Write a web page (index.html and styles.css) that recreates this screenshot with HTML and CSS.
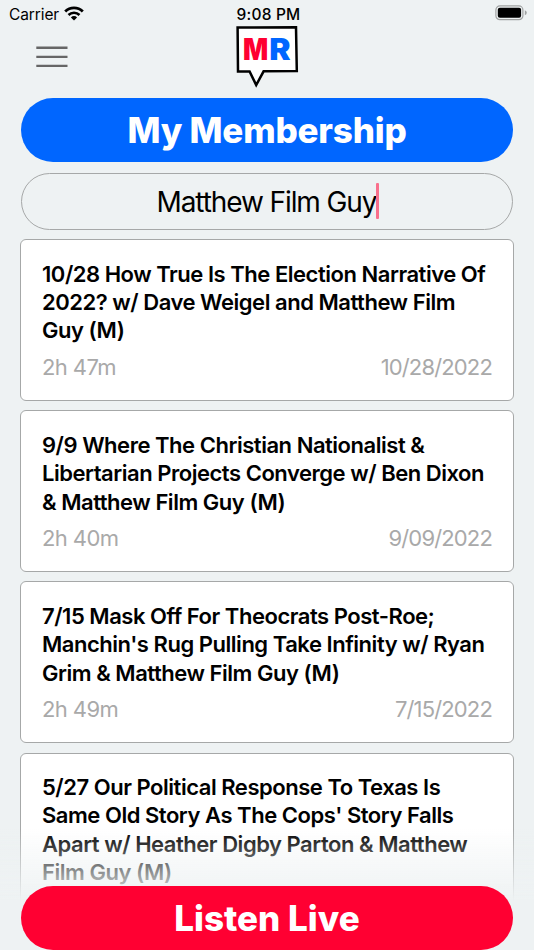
FILE: index.html
```html
<!DOCTYPE html>
<html lang="en">

<head>
    <meta charset="UTF-8">
    <meta name="viewport" content="width=device-width, initial-scale=1.0">
    <title>My Membership</title>
    <link rel="stylesheet" href="styles.css">
</head>

<body>
    <div class="status-bar">
        <div class="carrier">
            <span>Carrier</span>
            <svg class="wifi" width="20" height="15" viewBox="0 0 20 15">
                <path d="M1.2 5.6 A12.4 12.4 0 0 1 18.8 5.6" fill="none" stroke="#000" stroke-width="2.8" />
                <path d="M4.5 9 A7.8 7.8 0 0 1 15.5 9" fill="none" stroke="#000" stroke-width="2.6" />
                <path d="M10 14.5 L6.9 11.4 A4.4 4.4 0 0 1 13.1 11.4 Z" />
            </svg>
        </div>
        <span class="time">9:08 PM</span>
        <svg class="battery" width="33" height="16" viewBox="0 0 33 16">
            <rect x="0.9" y="0.9" width="27" height="13.8" rx="4" fill="none" stroke="#a0a2a2" stroke-width="1.2" />
            <rect x="2.8" y="2.8" width="23.3" height="10" rx="2" />
            <path d="M29.8 5.3 Q31.8 6 31.8 7.8 Q31.8 9.6 29.8 10.3 Z" fill="#a0a2a2" />
        </svg>
    </div>

    <header class="header">
        <button class="menu" aria-label="Menu">
            <svg width="32" height="22" viewBox="0 0 32 22">
                <path d="M0.3 1.8 H31.5 M0.3 10.9 H31.5 M0.3 19.9 H31.5" stroke="#666" stroke-width="2.4" />
            </svg>
        </button>
        <svg class="logo" width="64" height="64" viewBox="0 0 64 64">
            <path d="M2.6 2.6 L61 2.3 L61.8 46 L28.6 46.3 L21.2 60 L14.6 46.4 L3 46.5 Z" fill="#fff" stroke="#000" stroke-width="2.5" />
            <text class="logo-m" x="8" y="35.3" textLength="25.2" lengthAdjust="spacingAndGlyphs">M</text>
            <text class="logo-r" x="34.3" y="35.3" textLength="21.3" lengthAdjust="spacingAndGlyphs">R</text>
        </svg>
    </header>

    <main class="content">
        <button class="pill membership"><span>My Membership</span></button>

        <div class="search">
            <span class="query">Matthew Film Guy</span><span class="caret"></span>
        </div>

        <div class="episodes">
            <article class="card">
                <h2>10/28 How True Is The Election Narrative Of<br>2022? w/ Dave Weigel and Matthew Film<br>Guy (M)</h2>
                <div class="meta"><span>2h 47m</span><span class="date">10/28/2022</span></div>
            </article>
            <article class="card">
                <h2>9/9 Where The Christian Nationalist &amp;<br>Libertarian Projects Converge w/ Ben Dixon<br>&amp; Matthew Film Guy (M)</h2>
                <div class="meta"><span>2h 40m</span><span class="date">9/09/2022</span></div>
            </article>
            <article class="card">
                <h2>7/15 Mask Off For Theocrats Post-Roe;<br>Manchin's Rug Pulling Take Infinity w/ Ryan<br>Grim &amp; Matthew Film Guy (M)</h2>
                <div class="meta"><span>2h 49m</span><span class="date">7/15/2022</span></div>
            </article>
            <article class="card">
                <h2>5/27 Our Political Response To Texas Is<br>Same Old Story As The Cops' Story Falls<br>Apart w/ Heather Digby Parton &amp; Matthew<br>Film Guy (M)</h2>
            </article>
        </div>
    </main>

    <!-- Fixed footer, fades the list out behind the button -->
    <footer class="footer">
        <button class="pill live"><span>Listen Live</span></button>
    </footer>
</body>

</html>
```
FILE: styles.css
```css
* {
    box-sizing: border-box;
}

body {
    margin: 0;
    height: 950px;
    overflow: hidden;
    background-color: #eef2f3;
    color: #000;
    font-family: Inter, 'Liberation Sans', sans-serif;
}

button {
    border: none;
    padding: 0;
    font-family: inherit;
    cursor: pointer;
}

/* Status bar */
.status-bar {
    display: grid;
    grid-template-columns: 1fr auto 1fr;
    align-items: center;
    height: 26px;
    padding: 1px 6px 0 9px;
    font-size: 15.5px;
}

.carrier {
    display: flex;
    align-items: center;
    gap: 5px;
    padding-top: 1px;
    letter-spacing: -0.1px;
}

.wifi {
    margin-bottom: 2px;
}

.time {
    padding-top: 1px;
    font-weight: 500;
    letter-spacing: 0.2px;
}

.battery {
    justify-self: end;
    margin-bottom: 1px;
}

/* Header */
.header {
    display: grid;
    grid-template-columns: 1fr 64px 1fr;
    height: 72px;
    padding: 0 36px;
}

.menu {
    width: 32px;
    height: 22px;
    margin-top: 20px;
    background: none;
}

.menu svg {
    display: block;
}

.logo {
    margin-top: -1px;
    grid-column: 2;
}

.logo-m,
.logo-r {
    font-size: 30px;
    font-weight: 900;
}

.logo-m {
    fill: #ff0032;
}

.logo-r {
    fill: #0066ff;
}

/* Content */
.content {
    padding: 0 21px;
}

.pill {
    display: flex;
    align-items: center;
    justify-content: center;
    width: 100%;
    height: 64px;
    border-radius: 32px;
    color: #fff;
    font-size: 35px;
    font-weight: 800;
    white-space: nowrap;
}

.membership {
    background-color: #0066ff;
    letter-spacing: -0.2px;
}

.search {
    display: flex;
    align-items: center;
    justify-content: center;
    height: 57px;
    margin-top: 10.5px;
    padding: 1px 0 0 2px;
    border: 1px solid #a6a8a8;
    border-radius: 29px;
    font-size: 28px;
    letter-spacing: -1.1px;
    white-space: nowrap;
}

.caret {
    width: 3px;
    height: 36px;
    margin-top: -1px;
    border-radius: 1px;
    background-color: #f9708c;
}

.episodes {
    display: flex;
    flex-direction: column;
    gap: 9.2px;
    margin-top: 9.5px;
}

.card {
    height: 162px;
    flex-shrink: 0;
    margin: 0 -1px;
    padding: 19.5px 21px 0;
    background-color: #fff;
    border: 1px solid #a6a8a8;
    border-radius: 6px;
}

.card h2 {
    margin: 0;
    font-size: 22px;
    font-weight: 600;
    line-height: 28.4px;
    letter-spacing: -0.47px;
    white-space: nowrap;
}

.meta {
    display: flex;
    justify-content: space-between;
    margin-top: 8px;
    color: #a9a9a9;
    font-size: 22px;
    line-height: 28px;
    letter-spacing: -0.6px;
}

.date {
    letter-spacing: -0.85px;
}

/* Footer */
.footer {
    position: fixed;
    left: 0;
    right: 0;
    bottom: 0;
    padding: 57px 21px 0;
    background: linear-gradient(to bottom, rgba(238, 242, 243, 0), #eef2f3 72px);
}

.live {
    background-color: #ff0032;
}
```
